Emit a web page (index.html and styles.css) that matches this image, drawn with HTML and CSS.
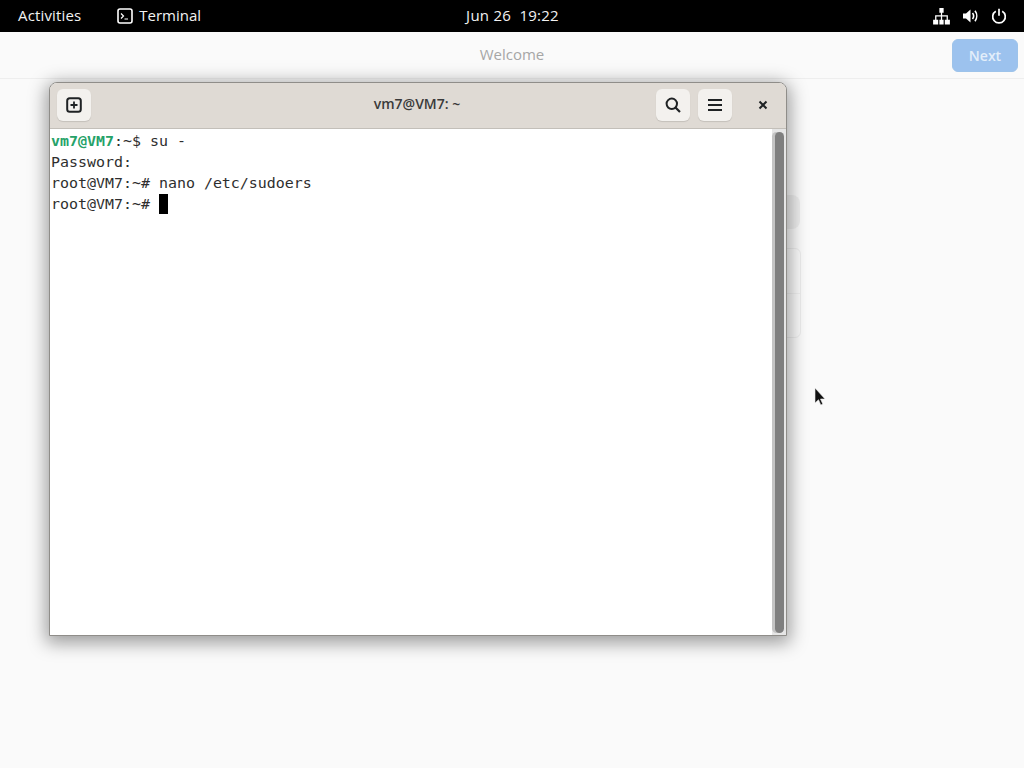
FILE: index.html
```html
<!DOCTYPE html>
<html lang="en">
<head>
<meta charset="utf-8">
<title>Terminal</title>
<link rel="stylesheet" href="styles.css">
</head>
<body>
<div class="topbar">
  <div class="top-left">
    <span class="top-label">Activities</span>
    <span class="app-menu">
      <svg class="app-icon" viewBox="0 0 16 16" width="16" height="16"><rect x="1" y="1" width="14" height="14" rx="2" fill="none" stroke="#fff" stroke-width="1.6"/><path d="M4 5.500 6.500 8 4 10.500M7.500 11H11" fill="none" stroke="#fff" stroke-width="1.200"/></svg>
      <span class="top-label tight">Terminal</span>
    </span>
  </div>
  <div class="clock">Jun 26&nbsp; 19:22</div>
  <div class="tray">
    <svg class="tray-net" viewBox="0 0 16 16" width="17" height="17"><path d="M6 0h4v4.500H8.600v2.300H14V11h1.900v4.500h-4.800V11h1.700V8H8.600v3h1.400v4.500H6V11h1.400V8H3.200v3h1.700v4.500H.1V11H2V6.800h5.400V4.500H6z" fill="#fff"/></svg>
    <svg class="tray-vol" viewBox="0 0 16 16" width="16" height="16"><path d="M1 5.500h3L8.500 1.500v13L4 10.500H1z" fill="#fff"/><path d="M10.500 5c1.300 1.700 1.300 4.300 0 6M13 2.800c2.300 3 2.300 7.400 0 10.400" fill="none" stroke="#fff" stroke-width="1.600"/></svg>
    <svg viewBox="0 0 16 16" width="16" height="16"><path d="M4.800 3.200a6.300 6.300 0 1 0 6.400 0M8 .8v7" fill="none" stroke="#fff" stroke-width="1.700"/></svg>
  </div>
</div>

<main class="desktop">
  <header class="welcome-head">
    <span class="welcome-title">Welcome</span>
    <button class="next-btn">Next</button>
  </header>

  <div class="ghost-pill"></div>
  <div class="ghost-card"><div class="ghost-divider"></div></div>

  <section class="terminal">
    <div class="titlebar">
      <button class="tb-btn">
        <svg viewBox="0 0 16 16" width="16" height="16"><rect x="1.200" y="1.200" width="13.600" height="13.600" rx="2.500" fill="none" stroke="#1f2224" stroke-width="2"/><path d="M8 4.500v7M4.500 8h7" stroke="#1f2224" stroke-width="1.800"/></svg>
      </button>
      <span class="tb-title">vm7@VM7: ~</span>
      <div class="tb-right">
        <button class="tb-btn">
          <svg viewBox="0 0 16 16" width="16" height="16"><circle cx="6.800" cy="6.800" r="5.200" fill="none" stroke="#1f2224" stroke-width="2"/><path d="M10.500 10.500 15 15" stroke="#1f2224" stroke-width="2.200"/></svg>
        </button>
        <button class="tb-btn">
          <svg viewBox="0 0 16 16" width="16" height="16"><path d="M1 3h14M1 8h14M1 13h14" stroke="#1f2224" stroke-width="2"/></svg>
        </button>
        <span class="tb-close">
          <svg viewBox="0 0 10 10" width="10" height="10"><path d="M1.500 1.500l7 7M8.500 1.500l-7 7" stroke="#1f2224" stroke-width="2"/></svg>
        </span>
      </div>
    </div>
    <div class="term-body">
      <div class="term-text">
        <div class="term-line"><span class="prompt">vm7@VM7</span><span>:~$ su -</span></div>
        <div class="term-line">Password:</div>
        <div class="term-line">root@VM7:~# nano /etc/sudoers</div>
        <div class="term-line"><span>root@VM7:~# </span><span class="cursor"></span></div>
      </div>
      <div class="scrollbar"><div class="thumb"></div></div>
    </div>
  </section>

  <svg class="pointer" viewBox="0 0 12 20" width="12" height="20"><path d="M1 1v15l3.500-3.300 2.300 5.300 2-.9-2.300-5.100H11z" fill="#111" stroke="#eee" stroke-width=".6"/></svg>
</main>
</body>
</html>
```
FILE: styles.css
```css
* { box-sizing: border-box; }
html, body { margin: 0; height: 100%; overflow: hidden; }
body {
  display: flex;
  flex-direction: column;
  width: 1024px;
  height: 768px;
  background: #fafafa;
  font-family: "Open Sans", "Noto Sans", sans-serif;
}
.topbar {
  height: 32px;
  flex: none;
  background: #000;
  color: #f2f2f2;
  display: grid;
  grid-template-columns: 1fr auto 1fr;
  align-items: center;
  padding: 0 17px 2px 18px;
  font-size: 15px;
  font-weight: 500;
}
.top-left { display: flex; align-items: center; gap: 36px; }
.top-label { white-space: nowrap; letter-spacing: .15px; }
.top-label.tight { letter-spacing: 0; }
.app-menu { display: flex; align-items: center; gap: 6px; }
.app-icon { display: block; margin-top: 2px; }
.clock { white-space: pre; font-size: 15px; letter-spacing: .25px; }
.tray { display: flex; justify-content: flex-end; align-items: center; gap: 13px; margin-top: 2px; }
.tray svg { display: block; }
.tray-net { margin-right: -1px; }
.desktop { position: relative; flex: 1; }
.welcome-head {
  height: 47px;
  display: flex;
  align-items: center;
  justify-content: center;
  position: relative;
  border-bottom: 1px solid #eeeeee;
}
.welcome-title { font-size: 15px; font-weight: 500; color: #a6a6a6; margin-top: -2px; }
.next-btn {
  position: absolute;
  right: 6px;
  top: 7px;
  width: 66px;
  height: 33px;
  border: 1px solid #9dc3ea;
  border-radius: 6px;
  background: #9cc2ee;
  color: #e3eefa;
  font: 600 14px "Open Sans", sans-serif;
  padding: 0;
}
.ghost-pill {
  position: absolute;
  left: 770px;
  top: 163px;
  width: 30px;
  height: 34px;
  border-radius: 8px;
  background: #eeeeee;
}
.ghost-card {
  position: absolute;
  left: 770px;
  top: 216px;
  width: 31px;
  height: 90px;
  border-radius: 6px;
  background: #fafafa;
  border: 1px solid #ededed;
}
.ghost-divider { margin-top: 44px; height: 1px; background: #f0f0f0; }
.terminal {
  position: absolute;
  left: 49px;
  top: 50px;
  width: 738px;
  height: 554px;
  background: #fff;
  border: 1px solid #8f8d89;
  border-radius: 8px 8px 0 0;
  box-shadow: 0 4px 18px 3px rgba(0,0,0,.38);
  display: flex;
  flex-direction: column;
  overflow: hidden;
}
.titlebar {
  flex: none;
  height: 46px;
  background: #dfdad4;
  border-bottom: 1px solid #c3bfb9;
  position: relative;
  display: flex;
  align-items: center;
  padding: 0 7px 2px 7px;
}
.tb-btn {
  width: 34px;
  height: 32px;
  border: none;
  border-radius: 6px;
  background: #f3f1ee;
  box-shadow: 0 1px 1px rgba(0,0,0,.12);
  display: flex;
  align-items: center;
  justify-content: center;
  padding: 0;
}
.tb-title {
  position: absolute;
  left: 0;
  right: 2px;
  text-align: center;
  font-size: 14px;
  font-weight: 600;
  color: #3a3a3a;
  margin-top: -2px;
}
.tb-right { margin-left: auto; display: flex; align-items: center; gap: 8px; }
.tb-close { width: 34px; height: 32px; display: flex; align-items: center; justify-content: center; margin-left: 6px; margin-right: -1px; }
.term-body { flex: 1; position: relative; background: #fff; }
.term-text {
  padding: 2px 0 0 1px;
  font: 14.95px/21px "DejaVu Sans Mono", "Liberation Mono", monospace;
  color: #2e2e2e;
}
.term-line { height: 21px; white-space: pre; }
.prompt { color: #26a269; font-weight: 700; }
.cursor { display: inline-block; width: 9px; height: 20px; background: #000; vertical-align: top; }
.scrollbar {
  position: absolute;
  right: 0;
  top: 0;
  bottom: 0;
  width: 14px;
  background: #e6e6e6;
}
.thumb {
  position: absolute;
  left: 3px;
  right: 2px;
  top: 3px;
  bottom: 2px;
  border-radius: 5px;
  background: #7f7f7f;
  box-shadow: -3px 0 0 #c4c4c4;
}
.pointer { position: absolute; left: 814px; top: 355px; }
```
